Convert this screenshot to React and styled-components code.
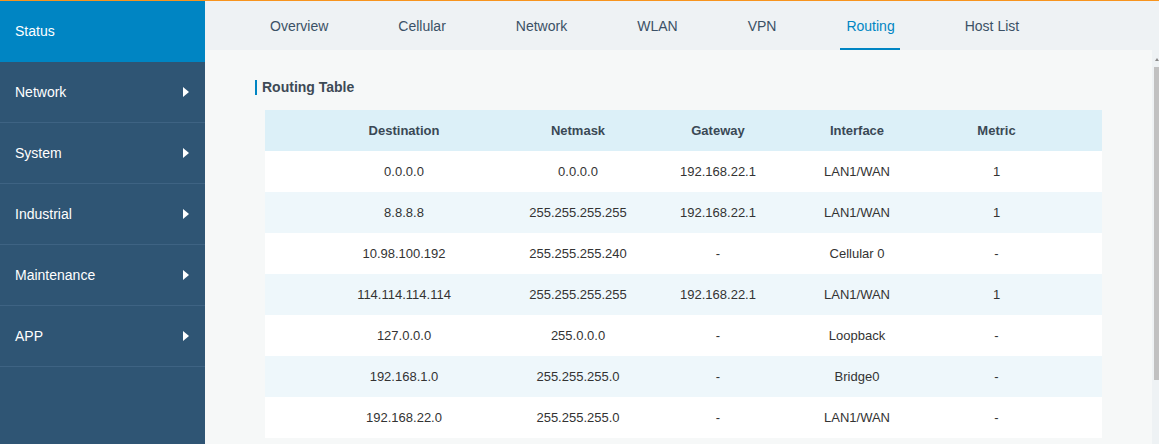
import React from "react";
import styled, { createGlobalStyle } from "styled-components";

const GlobalStyle = createGlobalStyle`
  html, body {
    margin: 0;
    padding: 0;
    height: 444px;
    overflow: hidden;
    font-family: "Liberation Sans", Arial, sans-serif;
  }
`;

/* layout */
const Page = styled.div`
  height: 444px;
  border-top: 1px solid #f7941d;
  display: flex;
  box-sizing: border-box;
`;

const Sidebar = styled.nav`
  width: 205px;
  flex-shrink: 0;
  background-color: #2f5574;
  display: flex;
  flex-direction: column;
`;

const SideItem = styled.div`
  height: 60px;
  border-bottom: 1px solid ${(props) => (props.active ? "#0085c3" : "#3e6383")};
  background-color: ${(props) => (props.active ? "#0085c3" : "transparent")};
  color: #fff;
  font-size: 14px;
  padding: 0 16px 0 15px;
  display: flex;
  align-items: center;
  justify-content: space-between;
`;

const Arrow = styled.span`
  width: 0;
  height: 0;
  border-top: 5.5px solid transparent;
  border-bottom: 5.5px solid transparent;
  border-left: 6px solid #fff;
`;

const Main = styled.div`
  flex: 1;
  display: flex;
  flex-direction: column;
  min-width: 0;
`;

const TabBar = styled.div`
  height: 49px;
  background-color: #eef2f4;
  display: flex;
  align-items: stretch;
  gap: 59px;
  padding-left: 59px;
  flex-shrink: 0;
`;

const Tab = styled.div`
  padding: 3px 5px 0 6px;
  font-size: 14px;
  color: ${(props) => (props.active ? "#0085c3" : "#3b5166")};
  display: flex;
  align-items: center;
  box-sizing: border-box;
  border-bottom: 2px solid ${(props) => (props.active ? "#0085c3" : "transparent")};
`;

const Body = styled.div`
  flex: 1;
  display: flex;
  background-color: #eef2f4;
  min-height: 0;
`;

const Panel = styled.div`
  width: 947px;
  background-color: #f6f8f8;
  padding: 30px 50px 0 60px;
  box-sizing: border-box;
`;

const ScrollTrack = styled.div`
  margin-left: auto;
  width: 6px;
  display: flex;
  flex-direction: column;
  align-items: flex-end;
  padding-top: 8px;
`;

const ScrollArrow = styled.span`
  width: 0;
  height: 0;
  border-left: 2.5px solid transparent;
  border-right: 2.5px solid transparent;
  border-bottom: 3px solid #8a8a8a;
`;

const ScrollThumb = styled.div`
  width: 5px;
  height: 313px;
  margin-top: 6px;
  background-color: #c1c1c1;
`;

const Heading = styled.h3`
  margin: 0 0 15px -10px;
  height: 15px;
  border-left: 2px solid #0085c3;
  padding-left: 5px;
  font-size: 14px;
  font-weight: bold;
  line-height: 15px;
  color: #3d4a56;
`;

const Table = styled.div`
  width: 837px;
`;

const Row = styled.div`
  height: 41px;
  display: grid;
  grid-template-columns: 208px 140px 140px 138px 141px;
  padding: 0 35px;
  align-items: center;
  justify-items: center;
  font-size: 13px;
  background-color: ${(props) =>
    props.header ? "#dcf0f8" : props.odd ? "#eef7fb" : "#ffffff"};
  color: ${(props) => (props.header ? "#3a4855" : "#333333")};
  font-weight: ${(props) => (props.header ? "bold" : "normal")};
`;

const menu = ["Network", "System", "Industrial", "Maintenance", "APP"];
const tabs = ["Overview", "Cellular", "Network", "WLAN", "VPN", "Routing", "Host List"];
const columns = ["Destination", "Netmask", "Gateway", "Interface", "Metric"];
const routes = [
  ["0.0.0.0", "0.0.0.0", "192.168.22.1", "LAN1/WAN", "1"],
  ["8.8.8.8", "255.255.255.255", "192.168.22.1", "LAN1/WAN", "1"],
  ["10.98.100.192", "255.255.255.240", "-", "Cellular 0", "-"],
  ["114.114.114.114", "255.255.255.255", "192.168.22.1", "LAN1/WAN", "1"],
  ["127.0.0.0", "255.0.0.0", "-", "Loopback", "-"],
  ["192.168.1.0", "255.255.255.0", "-", "Bridge0", "-"],
  ["192.168.22.0", "255.255.255.0", "-", "LAN1/WAN", "-"],
];

function App() {
  return (
    <>
      <GlobalStyle />
      <Page>
        <Sidebar>
          <SideItem active>Status</SideItem>
          {menu.map((m) => (
            <SideItem key={m}>
              {m}
              <Arrow />
            </SideItem>
          ))}
        </Sidebar>
        <Main>
          <TabBar>
            {tabs.map((t) => (
              <Tab key={t} active={t === "Routing"}>
                {t}
              </Tab>
            ))}
          </TabBar>
          <Body>
            <Panel>
              <Heading>Routing Table</Heading>
              <Table>
                <Row header>
                  {columns.map((c) => (
                    <span key={c}>{c}</span>
                  ))}
                </Row>
                {routes.map((r, i) => (
                  <Row key={i} odd={i % 2 === 1}>
                    {r.map((v, j) => (
                      <span key={j}>{v}</span>
                    ))}
                  </Row>
                ))}
              </Table>
            </Panel>
            <ScrollTrack>
              <ScrollArrow />
              <ScrollThumb />
            </ScrollTrack>
          </Body>
        </Main>
      </Page>
    </>
  );
}

export default App;
